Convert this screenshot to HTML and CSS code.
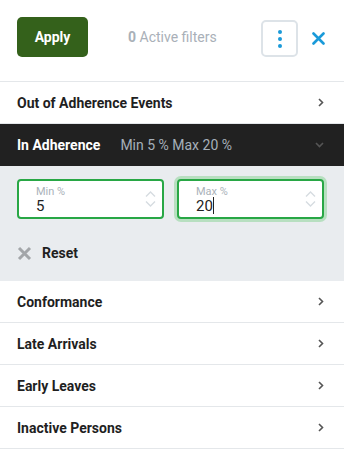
FILE: index.html
```html
<!DOCTYPE html>
<html lang="en">
<head>
    <meta charset="UTF-8">
    <meta name="viewport" content="width=device-width, initial-scale=1.0">
    <title>Filters</title>
    <link rel="stylesheet" href="styles.css">
</head>
<body>
    <div id="filterPanel">
        <!-- Top bar with apply + actions -->
        <div class="toolbar">
            <button class="apply-btn">Apply</button>
            <div class="active-count"><b>0</b> Active filters</div>
            <button class="more-btn" aria-label="More">
                <svg width="4" height="18" viewBox="0 0 4 18"><circle cx="2" cy="2" r="2" fill="#1a9ad9"/><circle cx="2" cy="9" r="2" fill="#1a9ad9"/><circle cx="2" cy="16" r="2" fill="#1a9ad9"/></svg>
            </button>
            <button class="close-btn" aria-label="Close">
                <svg width="13" height="13" viewBox="0 0 13 13"><path d="M1.5 1.5L11.5 11.5M11.5 1.5L1.5 11.5" stroke="#1a9ad9" stroke-width="2.6" stroke-linecap="round"/></svg>
            </button>
        </div>

        <div class="filter-row">
            <span class="filter-name">Out of Adherence Events</span>
            <svg class="chev" width="6" height="9" viewBox="0 0 6 9"><path d="M1 1L4.5 4.5L1 8" stroke="#555" stroke-width="1.6" fill="none"/></svg>
        </div>

        <!-- Expanded filter -->
        <div class="filter-row open">
            <span class="filter-name">In Adherence</span>
            <span class="filter-summary">Min 5 % Max 20 %</span>
            <svg class="chev" width="9" height="6" viewBox="0 0 9 6"><path d="M1 1L4.5 4.5L8 1" stroke="#555" stroke-width="1.6" fill="none"/></svg>
        </div>
        <div class="filter-body">
            <div class="range-inputs">
                <label class="num-field">
                    <span class="num-label">Min %</span>
                    <span class="num-value">5</span>
                    <span class="spinner">
                        <svg width="11" height="6" viewBox="0 0 11 6"><path d="M1 5.5L5.5 1L10 5.5" stroke="#d6dce1" stroke-width="1.4" fill="none"/></svg>
                        <svg width="11" height="6" viewBox="0 0 11 6"><path d="M1 0.5L5.5 5L10 0.5" stroke="#d6dce1" stroke-width="1.4" fill="none"/></svg>
                    </span>
                </label>
                <label class="num-field focused">
                    <span class="num-label">Max %</span>
                    <span class="num-value">20<span class="caret"></span></span>
                    <span class="spinner">
                        <svg width="11" height="6" viewBox="0 0 11 6"><path d="M1 5.5L5.5 1L10 5.5" stroke="#d6dce1" stroke-width="1.4" fill="none"/></svg>
                        <svg width="11" height="6" viewBox="0 0 11 6"><path d="M1 0.5L5.5 5L10 0.5" stroke="#d6dce1" stroke-width="1.4" fill="none"/></svg>
                    </span>
                </label>
            </div>
            <div class="reset">
                <svg width="15" height="15" viewBox="0 0 15 15"><path d="M2 2L13 13M13 2L2 13" stroke="#a3a6a9" stroke-width="3"/></svg>
                <span>Reset</span>
            </div>
        </div>

        <div class="filter-row">
            <span class="filter-name">Conformance</span>
            <svg class="chev" width="6" height="9" viewBox="0 0 6 9"><path d="M1 1L4.5 4.5L1 8" stroke="#555" stroke-width="1.6" fill="none"/></svg>
        </div>
        <div class="filter-row">
            <span class="filter-name">Late Arrivals</span>
            <svg class="chev" width="6" height="9" viewBox="0 0 6 9"><path d="M1 1L4.5 4.5L1 8" stroke="#555" stroke-width="1.6" fill="none"/></svg>
        </div>
        <div class="filter-row">
            <span class="filter-name">Early Leaves</span>
            <svg class="chev" width="6" height="9" viewBox="0 0 6 9"><path d="M1 1L4.5 4.5L1 8" stroke="#555" stroke-width="1.6" fill="none"/></svg>
        </div>
        <div class="filter-row">
            <span class="filter-name">Inactive Persons</span>
            <svg class="chev" width="6" height="9" viewBox="0 0 6 9"><path d="M1 1L4.5 4.5L1 8" stroke="#555" stroke-width="1.6" fill="none"/></svg>
        </div>
    </div>
</body>
</html>
```

FILE: styles.css
```css
/* Reset margin for body */
body {
    margin: 0;
    overflow: hidden;
    font-family: Roboto, "Liberation Sans", sans-serif;
    background-color: #fff;
}

#filterPanel {
    width: 344px;
}

/* Top bar */
.toolbar {
    display: flex;
    align-items: flex-start;
    height: 82px;
    padding: 17px 17px 0 17px;
    box-sizing: border-box;
    border-bottom: 1px solid #e4e7ea;
}

.apply-btn {
    width: 71px;
    height: 40px;
    background-color: #34611b; /* Dark green */
    color: white;
    border: none;
    border-radius: 5px;
    font-family: inherit;
    font-size: 14px;
    font-weight: bold;
    cursor: pointer;
}

.active-count {
    margin-left: 40px;
    margin-top: 12px;
    font-size: 14px;
    color: #a9b0b8;
    flex: 1;
}

.more-btn {
    width: 37px;
    height: 37px;
    margin-top: 3px;
    background: white;
    border: 2px solid #dde3e8;
    border-radius: 5px;
    display: flex;
    align-items: center;
    justify-content: center;
    padding: 0;
    cursor: pointer;
}

.close-btn {
    background: none;
    border: none;
    padding: 0;
    margin-top: 15px;
    margin-left: 14px;
    margin-right: 2px;
    display: flex;
    cursor: pointer;
}

/* Filter rows */
.filter-row {
    display: flex;
    align-items: center;
    height: 42px;
    padding: 0 20px 0 17px;
    border-bottom: 1px solid #e4e7ea;
    box-sizing: border-box;
}

.filter-name {
    font-size: 14px;
    font-weight: bold;
    color: #1f1f1f;
    flex-shrink: 0;
}

.chev {
    margin-left: auto;
}

.filter-row.open {
    background-color: #212121;
    border-bottom: none;
}

.filter-row.open .filter-name {
    color: white;
}

.filter-summary {
    margin-left: 20px;
    font-size: 14px;
    color: #a6b0ba;
}

/* Expanded area */
.filter-body {
    background-color: #e9ecef;
    padding: 13px 20px 0 17px;
    height: 115px;
    box-sizing: border-box;
}

.range-inputs {
    display: flex;
    gap: 13px;
}

.num-field {
    flex: 1;
    height: 40px;
    background: white;
    border: 2px solid #28a745;
    border-radius: 4px;
    box-sizing: border-box;
    position: relative;
    padding: 5px 0 0 17px;
}

.num-field.focused {
    box-shadow: 0 0 0 3px #b7dfc0;
}

.num-label {
    display: block;
    font-size: 11px;
    color: #aab2ba;
    line-height: 11px;
}

.num-value {
    display: block;
    font-size: 15px;
    color: #222;
    line-height: 18px;
}

.caret {
    display: inline-block;
    width: 1px;
    height: 17px;
    background: #222;
    vertical-align: -3px;
}

.spinner {
    position: absolute;
    right: 6px;
    top: 10px;
    display: flex;
    flex-direction: column;
    gap: 4px;
}

.reset {
    display: flex;
    align-items: center;
    gap: 10px;
    margin-top: 26px;
    font-size: 14px;
    font-weight: bold;
    color: #1f1f1f;
}
```
